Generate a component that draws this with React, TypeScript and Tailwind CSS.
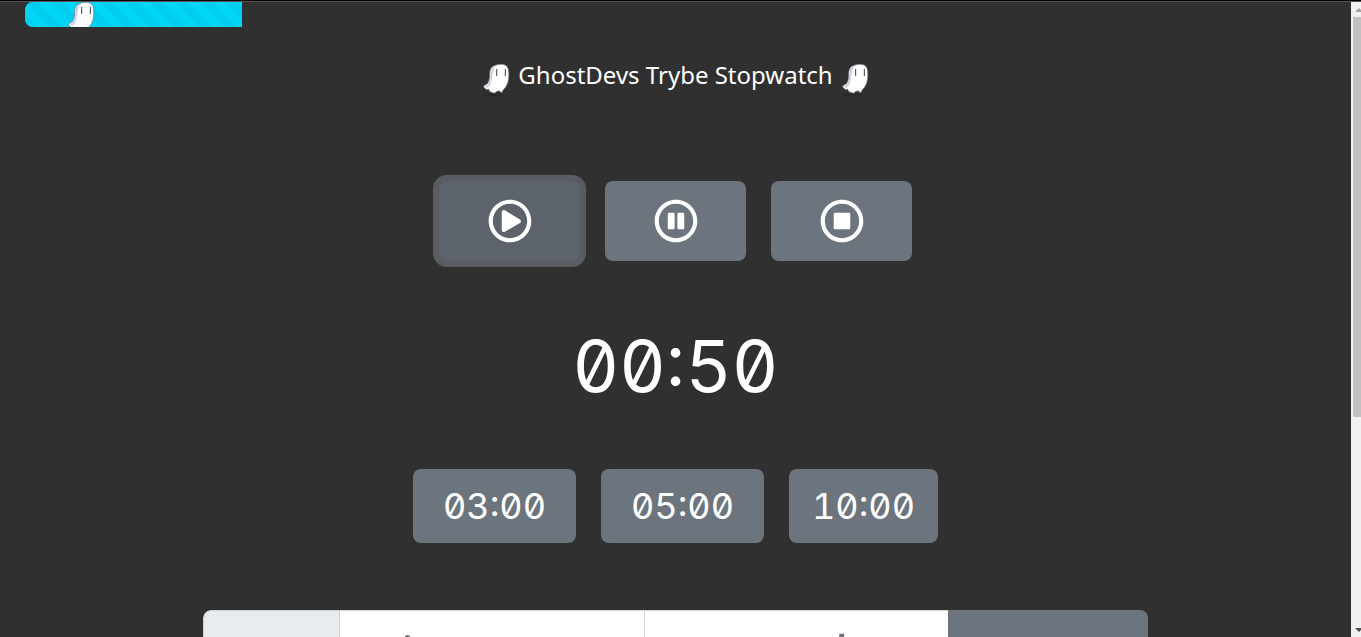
import React from "react";
import { FaRegPlayCircle, FaRegPauseCircle, FaRegStopCircle } from "react-icons/fa";

function Ghost() {
  return (
    <svg viewBox="0 0 28 34" className="h-[34px] w-7 shrink-0" aria-hidden="true">
      <ellipse cx="11" cy="31" rx="10" ry="1.5" fill="#29292c" />
      <path
        d="M13 1.4 C17 -0.2 23 0 25 2.4 C27 5 27 10 26.6 15 C26 20 23.6 23.6 21.6 25.4 L19.4 29 L17.4 26.8 L14.6 27.6 L12.6 29.2 L9.8 28.4 L7.6 27.4 L6.8 25.2 L4.4 25.6 L2 23.6 L1.6 22 L5.6 19.4 C8 16 7.6 12 7.8 8 C8.2 4.4 10 2.2 13 1.4Z"
        fill="#ffffff"
        stroke="#77717f"
        strokeWidth="0.7"
      />
      <path d="M13.4 1.8 C8 3.4 8.6 8 8.2 13 C7.8 18 6.6 20.5 3 22.2 L5 24 L7.4 22 C11 18 9.6 7 13.4 1.8Z" fill="#d5cede" />
      <path d="M14.6 5 V12 M23.4 5 V12" stroke="#5e5b64" strokeWidth="1.2" />
    </svg>
  );
}

const controls = [
  { label: "Play", Icon: FaRegPlayCircle, tone: "bg-[#5c636a] ring-6 ring-[#595d61]" },
  { label: "Pause", Icon: FaRegPauseCircle, tone: "bg-[#6c757d]" },
  { label: "Stop", Icon: FaRegStopCircle, tone: "bg-[#6c757d]" },
];

const presets = [
  { time: "03:00", width: "w-[163px]" },
  { time: "05:00", width: "w-[163px]" },
  { time: "10:00", width: "w-[149px]" },
];

export default function App() {
  return (
    <div className="flex h-screen overflow-hidden border-t border-black bg-[#303030] font-['Noto_Sans',sans-serif] text-white">
      <main className="min-w-0 flex-1 overflow-hidden border-t border-[#555555] px-[25px]">
        <div className="h-[25px] overflow-hidden rounded-lg" role="progressbar" aria-label="Elapsed" aria-valuenow={50} aria-valuemax={300}>
          <div className="flex h-full w-1/6 items-start overflow-hidden bg-[#00d7f7] bg-[linear-gradient(45deg,#00cdf0_25%,transparent_25%,transparent_50%,#00cdf0_50%,#00cdf0_75%,transparent_75%)] bg-[length:25px_25px] pl-[42px]">
            <Ghost />
          </div>
        </div>

        <h1 className="mt-8 flex h-11 items-center justify-center gap-2 text-2xl">
          <Ghost />
          <span className="pb-3">GhostDevs Trybe Stopwatch</span>
          <Ghost />
        </h1>

        <div className="mt-[78px] flex justify-center gap-[25px]">
          {controls.map(({ label, Icon, tone }) => (
            <button key={label} aria-label={label} className={`flex h-20 w-[141px] items-center justify-center rounded-lg ${tone}`}>
              <Icon className="size-11" />
            </button>
          ))}
        </div>

        <div className="mt-[60px] flex h-[90px] items-center justify-center font-['Inter',sans-serif] text-7xl slashed-zero tabular-nums">
          00:50
        </div>

        <div className="mt-[58px] flex justify-center gap-[25px]">
          {presets.map(({ time, width }) => (
            <button key={time} className={`h-[74px] rounded-lg bg-[#6c757d] font-['Inter',sans-serif] text-4xl slashed-zero tabular-nums ${width}`}>
              {time}
            </button>
          ))}
        </div>

        <form className="mx-auto mt-[67px] flex h-[90px] w-[945px] max-w-full overflow-hidden rounded-lg text-[56px]">
          <div className="w-[137px] shrink-0 rounded-l-lg border border-[#ced4da] bg-[#e9ecef]" />
          <input aria-label="minutos" placeholder="minutos" className="min-w-0 flex-1 border-y border-[#ced4da] bg-white px-2 text-[#495057] placeholder:text-[#6c757d]" />
          <input aria-label="segundos" placeholder="segundos" className="min-w-0 flex-1 border-y border-l border-[#ced4da] bg-white px-2 text-[#495057] placeholder:text-[#6c757d]" />
          <button type="button" aria-label="Start" className="w-[200px] shrink-0 bg-[#6c757d]" />
        </form>
      </main>

      <div className="flex w-[10px] shrink-0 flex-col justify-between overflow-hidden border-t border-[#555555] bg-[#f1f1f1]" aria-hidden="true">
        <div className="flex min-h-0 flex-col">
          <svg viewBox="0 0 10 15" className="h-[15px] w-[10px]">
            <path d="M4 10 L8 6 L12 10Z" fill="#a3a3a3" />
          </svg>
          <div className="ml-0.5 h-[400px] bg-[#c1c1c1]" />
        </div>
        <svg viewBox="0 0 10 15" className="h-[15px] w-[10px] shrink-0">
          <path d="M4 6 L8 10 L12 6Z" fill="#505050" />
        </svg>
      </div>
    </div>
  );
}
